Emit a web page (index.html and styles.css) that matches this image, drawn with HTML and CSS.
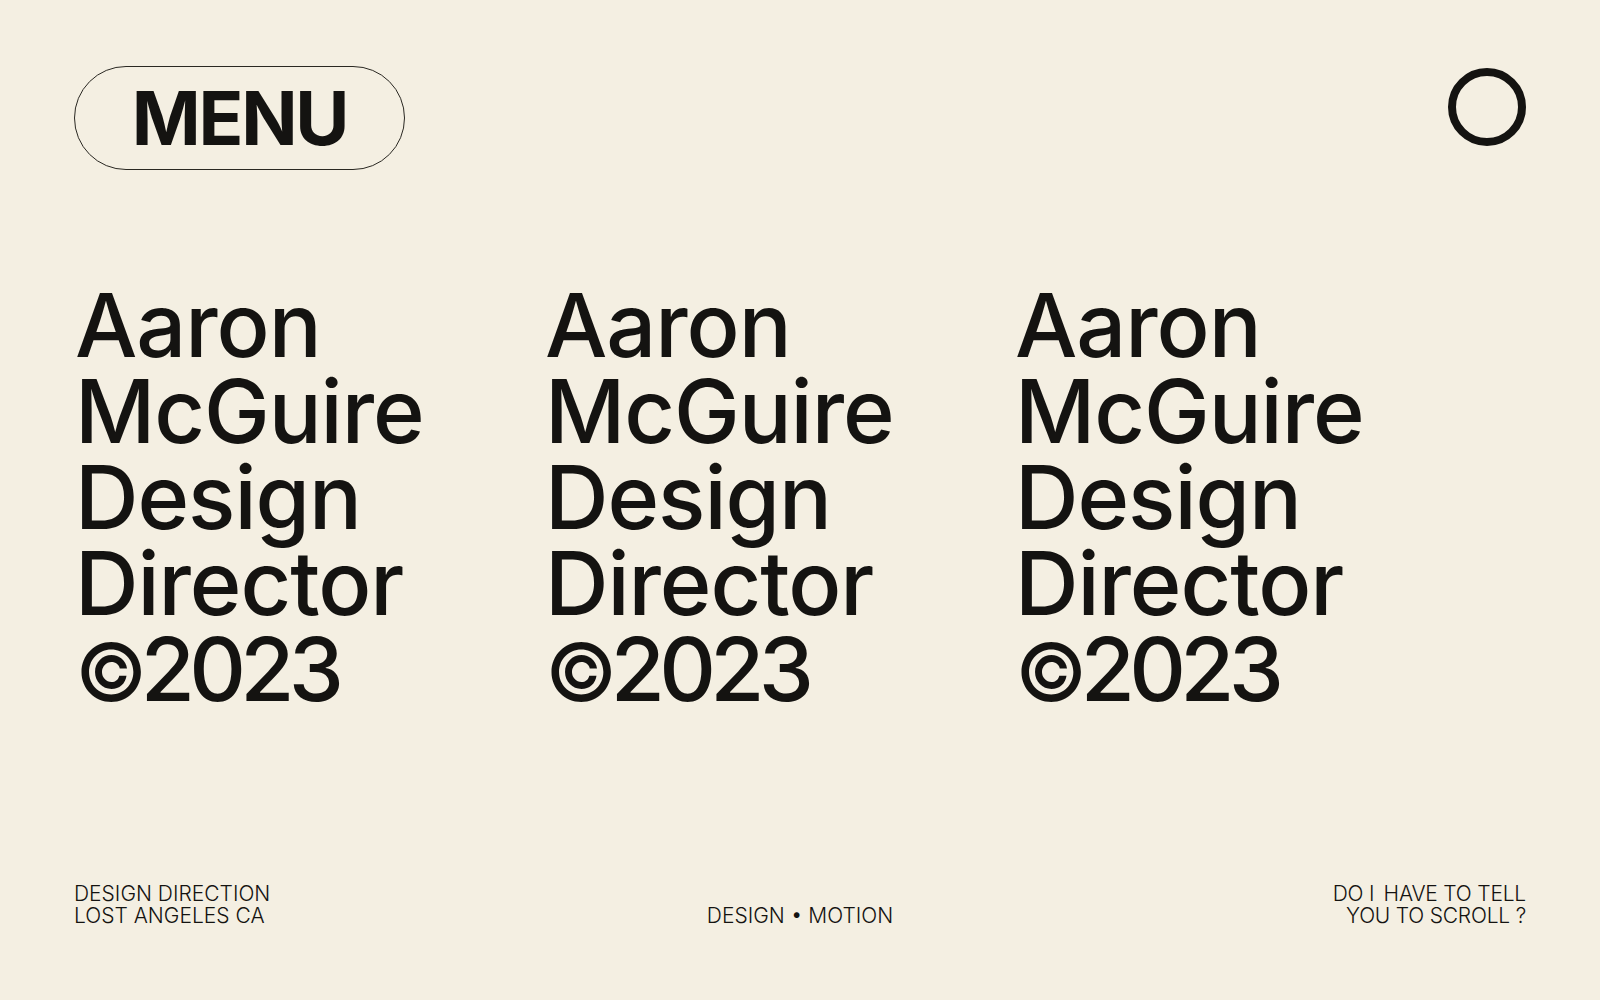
FILE: index.html
```html
<!DOCTYPE html>
<html lang="en">

<head>
  <meta charset="UTF-8">
  <meta name="viewport" content="width=device-width, initial-scale=1.0">
  <title>Aaron McGuire</title>
  <link rel="stylesheet" href="styles.css">
</head>

<body>
  <header>
    <button class="menu">MENU</button>
    <span class="dot"></span>
  </header>

  <main>
    <h1 class="name">Aaron<br>McGuire<br>Design<br>Director<br><span class="year"><span class="copy">©</span>2023</span></h1>
    <h1 class="name">Aaron<br>McGuire<br>Design<br>Director<br><span class="year"><span class="copy">©</span>2023</span></h1>
    <h1 class="name">Aaron<br>McGuire<br>Design<br>Director<br><span class="year"><span class="copy">©</span>2023</span></h1>
  </main>

  <footer>
    <p class="left">DESIGN DIRECTION<br>LOST ANGELES CA</p>
    <p class="center">DESIGN • MOTION</p>
    <p class="right">DO I &thinsp;HAVE TO TELL<br>YOU TO SCROLL ?</p>
  </footer>
</body>

</html>
```

FILE: styles.css
```css
body {
  background: #f4efe2;
  box-sizing: border-box;
  color: #141311;
  display: flex;
  flex-direction: column;
  font-family: Inter, "Noto Sans", sans-serif;
  height: 100vh;
  margin: 0;
  padding: 66px 74px 73px;
}

header {
  align-items: flex-start;
  display: flex;
  justify-content: space-between;

  .menu {
    background: none;
    border: 1.5px solid #2a2822;
    border-radius: 52px;
    color: inherit;
    font-family: inherit;
    font-size: 74px;
    font-weight: 700;
    height: 104px;
    letter-spacing: -0.03em;
    padding: 0;
    width: 331px;
  }

  .dot {
    border: 8px solid #141311;
    border-radius: 50%;
    box-sizing: border-box;
    height: 78px;
    margin-top: 2px;
    width: 78px;
  }
}

main {
  display: grid;
  grid-template-columns: repeat(3, 470px);
  margin-top: 112px;

  .name {
    font-size: 88px;
    font-weight: 500;
    letter-spacing: -0.012em;
    line-height: 86px;
    margin: 0 0 0 1px;
  }

  .year {
    letter-spacing: -0.065em;
  }

  .copy {
    display: inline-block;
    font-size: 0.9em;
    margin-right: -1px;
  }
}

footer {
  align-items: end;
  display: grid;
  grid-template-columns: 1fr auto 1fr;
  margin-top: auto;

  p {
    font-size: 21px;
    font-weight: 300;
    letter-spacing: 0;
    line-height: 22px;
    margin: 0;
  }

  .right {
    letter-spacing: -0.01em;
    text-align: right;
  }
}
```
